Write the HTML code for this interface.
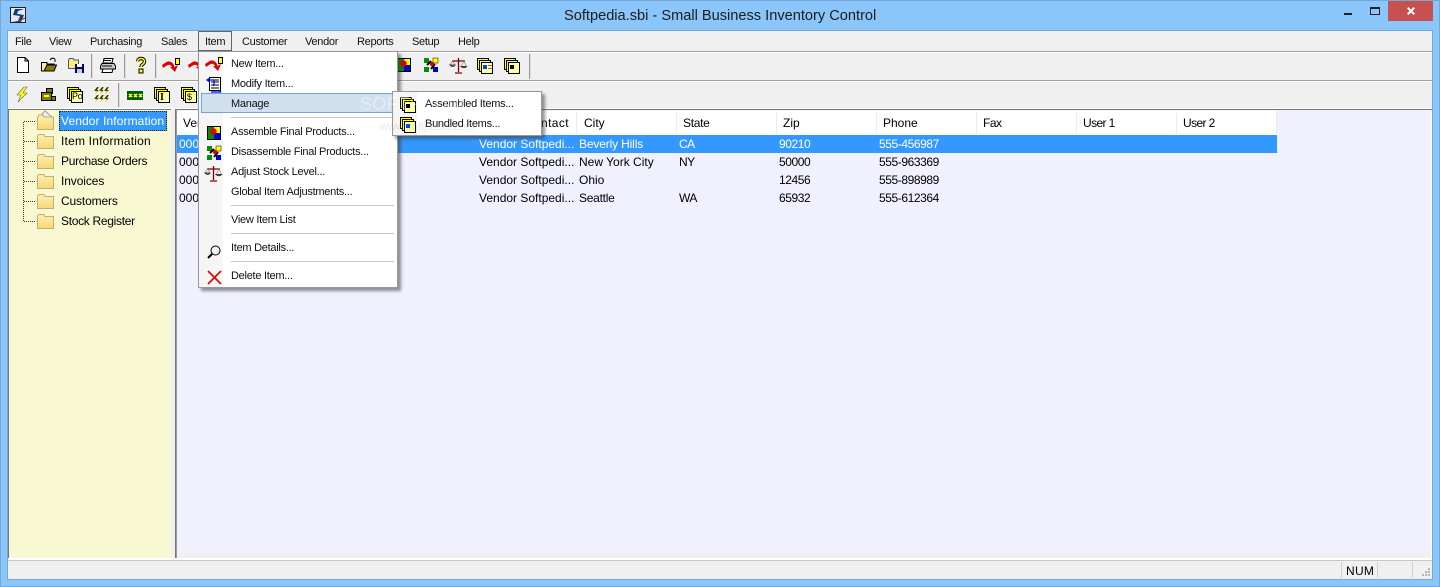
<!DOCTYPE html>
<html><head><meta charset="utf-8"><style>
html,body{margin:0;padding:0;width:1440px;height:587px;overflow:hidden;background:#8ac6fa}
body{position:relative;font-family:"Liberation Sans",sans-serif;font-size:12px;color:#000}
.a{position:absolute}
.t{position:absolute;white-space:nowrap;line-height:16px;letter-spacing:0}
.m{font-size:11px;letter-spacing:-.27px;color:#111;margin-top:1px}
.b{font-size:11px;letter-spacing:-.3px;color:#111;margin-top:1px}
.n{letter-spacing:-.42px}
.w{color:#fff}
.s{position:absolute;width:1px;background:#999;box-shadow:1px 0 0 #ddd}
svg{position:absolute;overflow:visible}
</style></head><body>
<svg width="0" height="0" style="position:absolute">
<defs><linearGradient id="fg" x1="0" y1="0" x2="0" y2="1"><stop offset="0" stop-color="#fdf0b4"/><stop offset="1" stop-color="#f6d674"/></linearGradient></defs>
<symbol id="stack" viewBox="0 0 16 16"><rect x=".5" y=".5" width="11" height="11" fill="#ff0" stroke="#000"/><rect x="2.500" y="2.500" width="11" height="11" fill="#ff0" stroke="#000"/><rect x="4.500" y="4.500" width="11" height="11" fill="#ffffa8" stroke="#000"/></symbol>
<symbol id="red" viewBox="0 0 18 16"><path d="M0 7L3 5Q8 1 12 7L12 9L16 7L13 14L8 9L10 9Q8 5 4 8L1 10Z" fill="#e00000"/><rect x="13.500" y=".5" width="4" height="6" fill="#ff0" stroke="#000"/></symbol>
<symbol id="fold" viewBox="0 0 18 15"><path d="M.5 14.500V2L2 .5H7L8 2.500H16.500V14.500Z" fill="url(#fg)" stroke="#c4ae6c"/></symbol>
</svg>
<div class="a" style="left:0;top:0;width:1440px;height:1px;background:#75a8d8"></div>
<div class="a" style="left:0;top:0;width:1px;height:587px;background:#75a8d8"></div>
<div class="a" style="left:1439px;top:0;width:1px;height:587px;background:#75a8d8"></div>
<div class="a" style="left:0;top:586px;width:1440px;height:1px;background:#75a8d8"></div>
<svg style="left:10px;top:7px" width="17" height="17" viewBox="0 0 17 17"><rect x=".5" y=".5" width="15" height="15" fill="#e8e8f0" stroke="#222"/><path d="M14 2 L5 2 L3 8 L10 9 L8 14 L2 15 L11 15 L14 8 L7 7 L8 4Z" fill="#0b3f6e"/><path d="M9 14 L15 11" stroke="#d02020" stroke-width="1.200"/></svg>
<div class="t" style="left:564px;top:6px;font-size:14.6px;line-height:20px;color:#1c1c1c">Softpedia.sbi - Small Business Inventory Control</div>
<div class="a" style="left:1344px;top:13px;width:8px;height:2px;background:#222"></div>
<div class="a" style="left:1370px;top:7px;width:8px;height:5px;border:1px solid #222;border-top:2px solid #222"></div>
<div class="a" style="left:1388px;top:1px;width:45px;height:20px;background:#c75050"></div>
<svg style="left:1407px;top:7px" width="8" height="8" viewBox="0 0 8 8"><path d="M.7.7 7.300 7.300M7.300.7 .7 7.300" stroke="#fff" stroke-width="2"/></svg>

<div class="a" style="left:7px;top:30px;width:1426px;height:550px;background:#75a9dc"></div>
<div class="a" style="left:8px;top:31px;width:1424px;height:548px;background:#f0f0f0"></div>
<div class="a" style="left:8px;top:51px;width:1424px;height:1px;background:#a0a0a0"></div>
<div class="a" style="left:8px;top:52px;width:1424px;height:1px;background:#fff"></div>
<div class="a" style="left:8px;top:80px;width:1424px;height:1px;background:#a0a0a0"></div>
<div class="a" style="left:8px;top:81px;width:1424px;height:1px;background:#fff"></div>
<div class="a" style="left:8px;top:108px;width:1424px;height:1px;background:#fff"></div>

<div class="t b" style="left:15px;top:33px">File</div>
<div class="t b" style="left:49px;top:33px">View</div>
<div class="t b" style="left:90px;top:33px">Purchasing</div>
<div class="t b" style="left:161px;top:33px">Sales</div>
<div class="a" style="left:198px;top:31px;width:32px;height:18px;border:1px solid #666;background:#eee"></div>
<div class="t b" style="left:205px;top:33px">Item</div>
<div class="t b" style="left:242px;top:33px">Customer</div>
<div class="t b" style="left:305px;top:33px">Vendor</div>
<div class="t b" style="left:357px;top:33px">Reports</div>
<div class="t b" style="left:412px;top:33px">Setup</div>
<div class="t b" style="left:458px;top:33px">Help</div>

<!-- toolbar 1 -->
<svg style="left:16px;top:57px" width="14" height="16" viewBox="0 0 14 16"><path d="M1.500.5H9L12.500 4V15.500H1.500Z M9 .5V4H12.500" fill="#fff" stroke="#000"/></svg>
<svg style="left:41px;top:57px" width="16" height="15" viewBox="0 0 16 15"><path d="M.5 5.500H6V7H13V14H.5Z" fill="#f5f0a0" stroke="#000"/><path d="M3 14L6 8H15.500L13 14Z" fill="#808000" stroke="#000"/><path d="M9 3Q11 0 14 2M14 2V5" fill="none" stroke="#000"/></svg>
<svg style="left:68px;top:58px" width="16" height="15" viewBox="0 0 16 15"><path d="M.5 10.500V2L1.500.5H5L6 2H10.500V10.500Z" fill="#f6ee80" stroke="#555"/><rect x="7" y="6" width="9" height="9" fill="#000080"/><rect x="9" y="6" width="5" height="3" fill="#fff"/><rect x="9" y="11" width="5" height="4" fill="#ccc"/></svg>
<div class="s" style="left:91px;top:54px;height:24px"></div>
<svg style="left:100px;top:58px" width="16" height="15" viewBox="0 0 16 15"><path d="M4 .5H13L12 5H3Z" fill="#fff" stroke="#000"/><path d="M2 5.500H14L15.500 8V11H.5V8Z" fill="#ccc" stroke="#000"/><path d="M3 11H13L12 14.500H2Z" fill="#fff" stroke="#000"/><path d="M2 8H12M4 2.500H11" stroke="#000"/></svg>
<div class="s" style="left:124px;top:54px;height:24px"></div>
<svg style="left:136px;top:57px" width="10" height="16" viewBox="0 0 10 16"><path d="M1.500 4.500Q2 1.500 5 1.500Q8.500 1.500 8.500 4.500Q8.500 6 6.500 7.500Q5 8.500 5 10" fill="none" stroke="#000" stroke-width="3.400"/><path d="M1.500 4.500Q2 1.500 5 1.500Q8.500 1.500 8.500 4.500Q8.500 6 6.500 7.500Q5 8.500 5 10" fill="none" stroke="#ff0" stroke-width="1.500"/><rect x="3" y="12" width="4" height="4" fill="#ff0" stroke="#000"/></svg>
<div class="s" style="left:155px;top:54px;height:24px"></div>
<svg style="left:162px;top:58px" width="18" height="16"><use href="#red"/></svg>
<svg style="left:188px;top:58px" width="18" height="16"><use href="#red"/></svg>
<svg style="left:397px;top:58px" width="14" height="14" viewBox="0 0 14 14"><rect width="14" height="14" fill="#000"/><rect x="1" y="1" width="6" height="6" fill="#0a8a0a"/><rect x="7" y="1" width="6" height="6" fill="#ff0"/><rect x="1" y="7" width="6" height="6" fill="#0a8a0a"/><rect x="7" y="7" width="6" height="6" fill="#0000d0"/><circle cx="6.500" cy="5.500" r="3.200" fill="#e00000"/></svg>
<svg style="left:424px;top:58px" width="14" height="14" viewBox="0 0 14 14"><rect x="0" y="0" width="5" height="5" fill="#0a8a0a"/><rect x="9" y="0" width="5" height="5" fill="#ff0" stroke="#000" stroke-width=".5"/><rect x="0" y="9" width="5" height="5" fill="#0a8a0a"/><rect x="9" y="9" width="5" height="5" fill="#0000d0"/><path d="M3 7L7 3M7 11L11 6" stroke="#000" stroke-width="2"/><circle cx="8" cy="6" r="2.200" fill="#e00000"/></svg>
<svg style="left:450px;top:58px" width="17" height="16" viewBox="0 0 17 16"><path d="M8.500 0V14M5 15H12M2 3H15" stroke="#800000" stroke-width="1.300"/><path d="M0 7Q3 10 5 7Z M11 8.500Q14 11 16.500 8.500Z" fill="#ddd" stroke="#333"/><path d="M0 7L2.500 3L5 7M11 8.500L14 3L16.500 8.500" fill="none" stroke="#777" stroke-width=".6"/></svg>
<svg style="left:477px;top:58px" width="16" height="16"><use href="#stack"/></svg><div class="a" style="left:483px;top:65px;width:4px;height:4px;background:#0040e0"></div><div class="a" style="left:488px;top:65px;width:4px;height:1px;background:#e04040"></div><div class="a" style="left:488px;top:68px;width:4px;height:1px;background:#40a040"></div>
<svg style="left:504px;top:58px" width="16" height="16"><use href="#stack"/></svg><div class="a" style="left:510px;top:65px;width:4px;height:4px;background:#000"></div>
<div class="s" style="left:529px;top:54px;height:25px"></div>

<!-- toolbar 2 -->
<svg style="left:15px;top:87px" width="13" height="15" viewBox="0 0 13 15"><path d="M9 0L2 8H6L3 15L12 6H8L12 0Z" fill="#ff0" stroke="#666" stroke-width=".6"/></svg>
<svg style="left:41px;top:88px" width="15" height="13" viewBox="0 0 15 13"><rect x="5.500" y=".5" width="6" height="5" fill="#808000" stroke="#000"/><rect x=".5" y="4.500" width="10" height="8" fill="#808000" stroke="#000"/><rect x="10.500" y="8.500" width="4" height="4" fill="#808000" stroke="#000"/><rect x="3" y="7" width="5" height="2" fill="#ff0"/></svg>
<svg style="left:67px;top:87px" width="16" height="16"><use href="#stack"/></svg><div class="t" style="left:72px;top:90px;font-size:9px;line-height:13px;letter-spacing:-.3px">Po</div>
<svg style="left:94px;top:87px" width="15" height="15" viewBox="0 0 15 15"><path d="M3 0L0 4H3L1 7L5 3H3L5 0ZM8 0L5 4H8L6 7L10 3H8L10 0ZM13 0L10 4H13L11 7L15 3H13L15 0ZM3 8L0 12H3L1 15L5 11H3L5 8ZM8 8L5 12H8L6 15L10 11H8L10 8ZM13 8L10 12H13L11 15L15 11H13L15 8Z" fill="#222" stroke="#ff0" stroke-width=".3"/></svg>
<div class="s" style="left:118px;top:83px;height:24px"></div>
<svg style="left:127px;top:91px" width="16" height="9" viewBox="0 0 16 9"><rect width="16" height="9" fill="#006000"/><path d="M2 3L5 6M5 3L2 6M7 3L10 6M10 3L7 6M12 3L15 6M15 3L12 6" stroke="#ffff60" stroke-width="1.500"/></svg>
<svg style="left:154px;top:87px" width="16" height="16"><use href="#stack"/></svg><div class="t" style="left:160px;top:92px;font-size:10px;line-height:11px;font-family:'Liberation Serif',serif;font-weight:bold">I</div>
<svg style="left:181px;top:87px" width="16" height="16"><use href="#stack"/></svg><div class="t" style="left:187px;top:92px;font-size:9px;line-height:11px">$</div>

<!-- panes -->
<div class="a" style="left:8px;top:109px;width:163px;height:1px;background:#777"></div>
<div class="a" style="left:8px;top:109px;width:1px;height:449px;background:#777"></div>
<div class="a" style="left:9px;top:110px;width:162px;height:448px;background:#f8f8d2"></div>
<div class="a" style="left:175px;top:109px;width:1257px;height:1px;background:#777"></div>
<div class="a" style="left:175px;top:109px;width:1px;height:449px;background:#777"></div>
<div class="a" style="left:176px;top:109px;width:1px;height:449px;background:#999"></div>
<div class="a" style="left:177px;top:110px;width:1254px;height:443px;background:#f0f0ff"></div>
<div class="a" style="left:177px;top:111px;width:1100px;height:24px;background:#fff"></div>
<div class="a" style="left:8px;top:558px;width:1424px;height:2px;background:#fff"></div>
<div class="a" style="left:8px;top:560px;width:1424px;height:1px;background:#c8c8c8"></div>
<div class="a" style="left:1431px;top:110px;width:1px;height:448px;background:#fff"></div>

<!-- tree -->
<svg style="left:20px;top:118px" width="22" height="106"><path d="M3.500 4V104M4 3.500H16M4 23.500H16M4 43.500H16M4 63.500H16M4 83.500H16M4 103.500H16" stroke="#333" stroke-dasharray="1 1" fill="none"/></svg>
<svg style="left:37px;top:110px" width="18" height="20" viewBox="0 0 18 20"><path d="M8 1L15 7H2Z" fill="#eee" stroke="#999"/><path d="M.5 8L2 5H6L7 7H16.500V19.500H.5Z" fill="url(#fg)" stroke="#c4ae6c"/></svg>
<svg style="left:37px;top:134px" width="18" height="15"><use href="#fold"/></svg>
<svg style="left:37px;top:154px" width="18" height="15"><use href="#fold"/></svg>
<svg style="left:37px;top:174px" width="18" height="15"><use href="#fold"/></svg>
<svg style="left:37px;top:194px" width="18" height="15"><use href="#fold"/></svg>
<svg style="left:37px;top:214px" width="18" height="15"><use href="#fold"/></svg>
<div class="a" style="left:59px;top:111px;width:106px;height:18px;background:#3399ff;border:1px dotted #222"></div>
<div class="t w" style="left:61px;top:113px;letter-spacing:.1px">Vendor Information</div>
<div class="t" style="left:61px;top:133px;letter-spacing:.2px">Item Information</div>
<div class="t" style="left:61px;top:153px;letter-spacing:-.3px">Purchase Orders</div>
<div class="t" style="left:61px;top:173px;letter-spacing:-.1px">Invoices</div>
<div class="t" style="left:61px;top:193px;letter-spacing:-.15px">Customers</div>
<div class="t" style="left:61px;top:213px;letter-spacing:-.3px">Stock Register</div>

<!-- list header -->
<div class="t" style="left:183px;top:115px">Ven</div>
<div class="t" style="left:541px;top:115px;letter-spacing:.4px">ntact</div>
<div class="a" style="left:576px;top:112px;width:1px;height:22px;background:#e4eef8"></div>
<div class="a" style="left:676px;top:112px;width:1px;height:22px;background:#e4eef8"></div>
<div class="a" style="left:776px;top:112px;width:1px;height:22px;background:#e4eef8"></div>
<div class="a" style="left:876px;top:112px;width:1px;height:22px;background:#e4eef8"></div>
<div class="a" style="left:976px;top:112px;width:1px;height:22px;background:#e4eef8"></div>
<div class="a" style="left:1076px;top:112px;width:1px;height:22px;background:#e4eef8"></div>
<div class="a" style="left:1176px;top:112px;width:1px;height:22px;background:#e4eef8"></div>
<div class="a" style="left:1276px;top:112px;width:1px;height:22px;background:#e4eef8"></div>
<div class="t" style="left:584px;top:115px">City</div>
<div class="t" style="left:683px;top:115px;letter-spacing:-.3px">State</div>
<div class="t" style="left:783px;top:115px">Zip</div>
<div class="t" style="left:883px;top:115px">Phone</div>
<div class="t" style="left:983px;top:115px;letter-spacing:-.5px">Fax</div>
<div class="t" style="left:1083px;top:115px;letter-spacing:-.6px">User 1</div>
<div class="t" style="left:1183px;top:115px;letter-spacing:-.6px">User 2</div>

<!-- rows -->
<div class="a" style="left:177px;top:135px;width:1100px;height:18px;background:#3399ff"></div>
<div class="t w" style="left:179px;top:136px">000</div><div class="t w" style="left:479px;top:136px">Vendor Softpedi...</div><div class="t w" style="left:579px;top:136px;letter-spacing:-.15px">Beverly Hills</div><div class="t w" style="left:679px;top:136px;letter-spacing:-.5px">CA</div><div class="t w n" style="left:779px;top:136px">90210</div><div class="t w n" style="left:879px;top:136px">555-456987</div>
<div class="t" style="left:179px;top:154px">000</div><div class="t" style="left:479px;top:154px">Vendor Softpedi...</div><div class="t" style="left:579px;top:154px">New York City</div><div class="t" style="left:679px;top:154px;letter-spacing:-.5px">NY</div><div class="t n" style="left:779px;top:154px">50000</div><div class="t n" style="left:879px;top:154px">555-963369</div>
<div class="t" style="left:179px;top:172px">000</div><div class="t" style="left:479px;top:172px">Vendor Softpedi...</div><div class="t" style="left:579px;top:172px">Ohio</div><div class="t n" style="left:779px;top:172px">12456</div><div class="t n" style="left:879px;top:172px">555-898989</div>
<div class="t" style="left:179px;top:190px">000</div><div class="t" style="left:479px;top:190px">Vendor Softpedi...</div><div class="t" style="left:579px;top:190px;letter-spacing:-.25px">Seattle</div><div class="t" style="left:679px;top:190px;letter-spacing:-.5px">WA</div><div class="t n" style="left:779px;top:190px">65932</div><div class="t n" style="left:879px;top:190px">555-612364</div>

<!-- status -->
<div class="a" style="left:1341px;top:562px;width:1px;height:16px;background:#cfcfcf"></div>
<div class="a" style="left:1377px;top:562px;width:1px;height:16px;background:#cfcfcf"></div>
<div class="a" style="left:1412px;top:562px;width:1px;height:16px;background:#cfcfcf"></div>
<div class="t" style="left:1346px;top:563px;letter-spacing:.3px">NUM</div>
<svg style="left:1421px;top:568px" width="10" height="10"><path d="M7 0h2v2H7zM4 3h2v2H4zM7 3h2v2H7zM1 6h2v2H1zM4 6h2v2H4zM7 6h2v2H7z" fill="#b8b8b8"/></svg>

<!-- menu -->
<div class="a" style="left:198px;top:51px;width:200px;height:237px;background:#f5f5f5;border:1px solid #979797;box-sizing:border-box;box-shadow:3px 3px 3px rgba(60,60,60,.55)"></div>
<div class="a" style="left:223px;top:52px;width:174px;height:235px;background:#fff"></div>
<div class="a" style="left:201px;top:93px;width:192px;height:20px;background:#d1e0ee;border:1px solid #6fa5d8;box-sizing:border-box"></div>
<div class="t m" style="left:231px;top:55px">New Item...</div>
<div class="t m" style="left:231px;top:75px">Modify Item...</div>
<div class="t m" style="left:231px;top:95px">Manage</div>
<div class="t m" style="left:231px;top:123px">Assemble Final Products...</div>
<div class="t m" style="left:231px;top:143px">Disassemble Final Products...</div>
<div class="t m" style="left:231px;top:163px">Adjust Stock Level...</div>
<div class="t m" style="left:231px;top:183px">Global Item Adjustments...</div>
<div class="t m" style="left:231px;top:211px">View Item List</div>
<div class="t m" style="left:231px;top:239px">Item Details...</div>
<div class="t m" style="left:231px;top:267px">Delete Item...</div>
<div class="a" style="left:231px;top:117px;width:163px;height:1px;background:#c8c8c8"></div>
<div class="a" style="left:231px;top:205px;width:163px;height:1px;background:#c8c8c8"></div>
<div class="a" style="left:231px;top:233px;width:163px;height:1px;background:#c8c8c8"></div>
<div class="a" style="left:231px;top:261px;width:163px;height:1px;background:#c8c8c8"></div>
<svg style="left:205px;top:57px" width="18" height="16"><use href="#red"/></svg>
<svg style="left:206px;top:77px" width="16" height="16" viewBox="0 0 16 16"><rect x="3.500" y=".5" width="11" height="13" fill="#fff" stroke="#000"/><path d="M5 3H13M5 5H13M5 8H13M5 11H13" stroke="#000"/><path d="M4 1L1 3L4 5M1 3H8V9M5 15H15M13 13L15 15" fill="none" stroke="#0000e0" stroke-width="1.200"/></svg>
<svg style="left:207px;top:126px" width="14" height="14" viewBox="0 0 14 14"><rect width="14" height="14" fill="#000"/><rect x="1" y="1" width="6" height="6" fill="#0a8a0a"/><rect x="7" y="1" width="6" height="6" fill="#ff0"/><rect x="1" y="7" width="6" height="6" fill="#0a8a0a"/><rect x="7" y="7" width="6" height="6" fill="#0000d0"/><circle cx="6.500" cy="5.500" r="3.200" fill="#e00000"/></svg>
<svg style="left:207px;top:146px" width="14" height="14" viewBox="0 0 14 14"><rect x="0" y="0" width="5" height="5" fill="#0a8a0a"/><rect x="9" y="0" width="5" height="5" fill="#ff0" stroke="#000" stroke-width=".5"/><rect x="0" y="9" width="5" height="5" fill="#0a8a0a"/><rect x="9" y="9" width="5" height="5" fill="#0000d0"/><path d="M3 7L7 3M7 11L11 6" stroke="#000" stroke-width="2"/><circle cx="8" cy="6" r="2.200" fill="#e00000"/></svg>
<svg style="left:205px;top:166px" width="17" height="16" viewBox="0 0 17 16"><path d="M8.500 0V14M5 15H12M2 3H15" stroke="#800000" stroke-width="1.300"/><path d="M0 7Q3 10 5 7Z M11 8.500Q14 11 16.500 8.500Z" fill="#ddd" stroke="#333"/><path d="M0 7L2.500 3L5 7M11 8.500L14 3L16.500 8.500" fill="none" stroke="#777" stroke-width=".6"/></svg>
<svg style="left:207px;top:245px" width="14" height="14" viewBox="0 0 14 14"><circle cx="8.500" cy="5.500" r="4.500" fill="none" stroke="#000"/><path d="M5 9L1 13" stroke="#000" stroke-width="2"/></svg>
<svg style="left:208px;top:271px" width="13" height="13" viewBox="0 0 13 13"><path d="M0 0L13 13M13 0L0 13" stroke="#e00000" stroke-width="1.600"/></svg>

<!-- submenu -->
<div class="a" style="left:392px;top:91px;width:150px;height:45px;background:#f5f5f5;border:1px solid #979797;box-sizing:border-box;box-shadow:3px 3px 3px rgba(60,60,60,.55)"></div>
<div class="a" style="left:417px;top:92px;width:124px;height:43px;background:#fff"></div>
<svg style="left:400px;top:97px" width="16" height="16"><use href="#stack"/></svg><div class="a" style="left:406px;top:104px;width:4px;height:4px;background:#000"></div>
<svg style="left:400px;top:117px" width="16" height="16"><use href="#stack"/></svg><div class="a" style="left:406px;top:124px;width:4px;height:4px;background:#0040e0"></div>
<div class="t m" style="left:425px;top:95px">Assembled Items...</div>
<div class="t m" style="left:425px;top:115px">Bundled Items...</div>
<div class="t" style="left:360px;top:94px;font-size:18px;line-height:20px;color:rgba(255,255,255,.4);letter-spacing:.4px">SOFTPEDIA</div>
<div class="t" style="left:380px;top:121px;font-size:11px;line-height:12px;color:rgba(140,140,140,.2)">www.softpedia.com</div>
</body></html>
